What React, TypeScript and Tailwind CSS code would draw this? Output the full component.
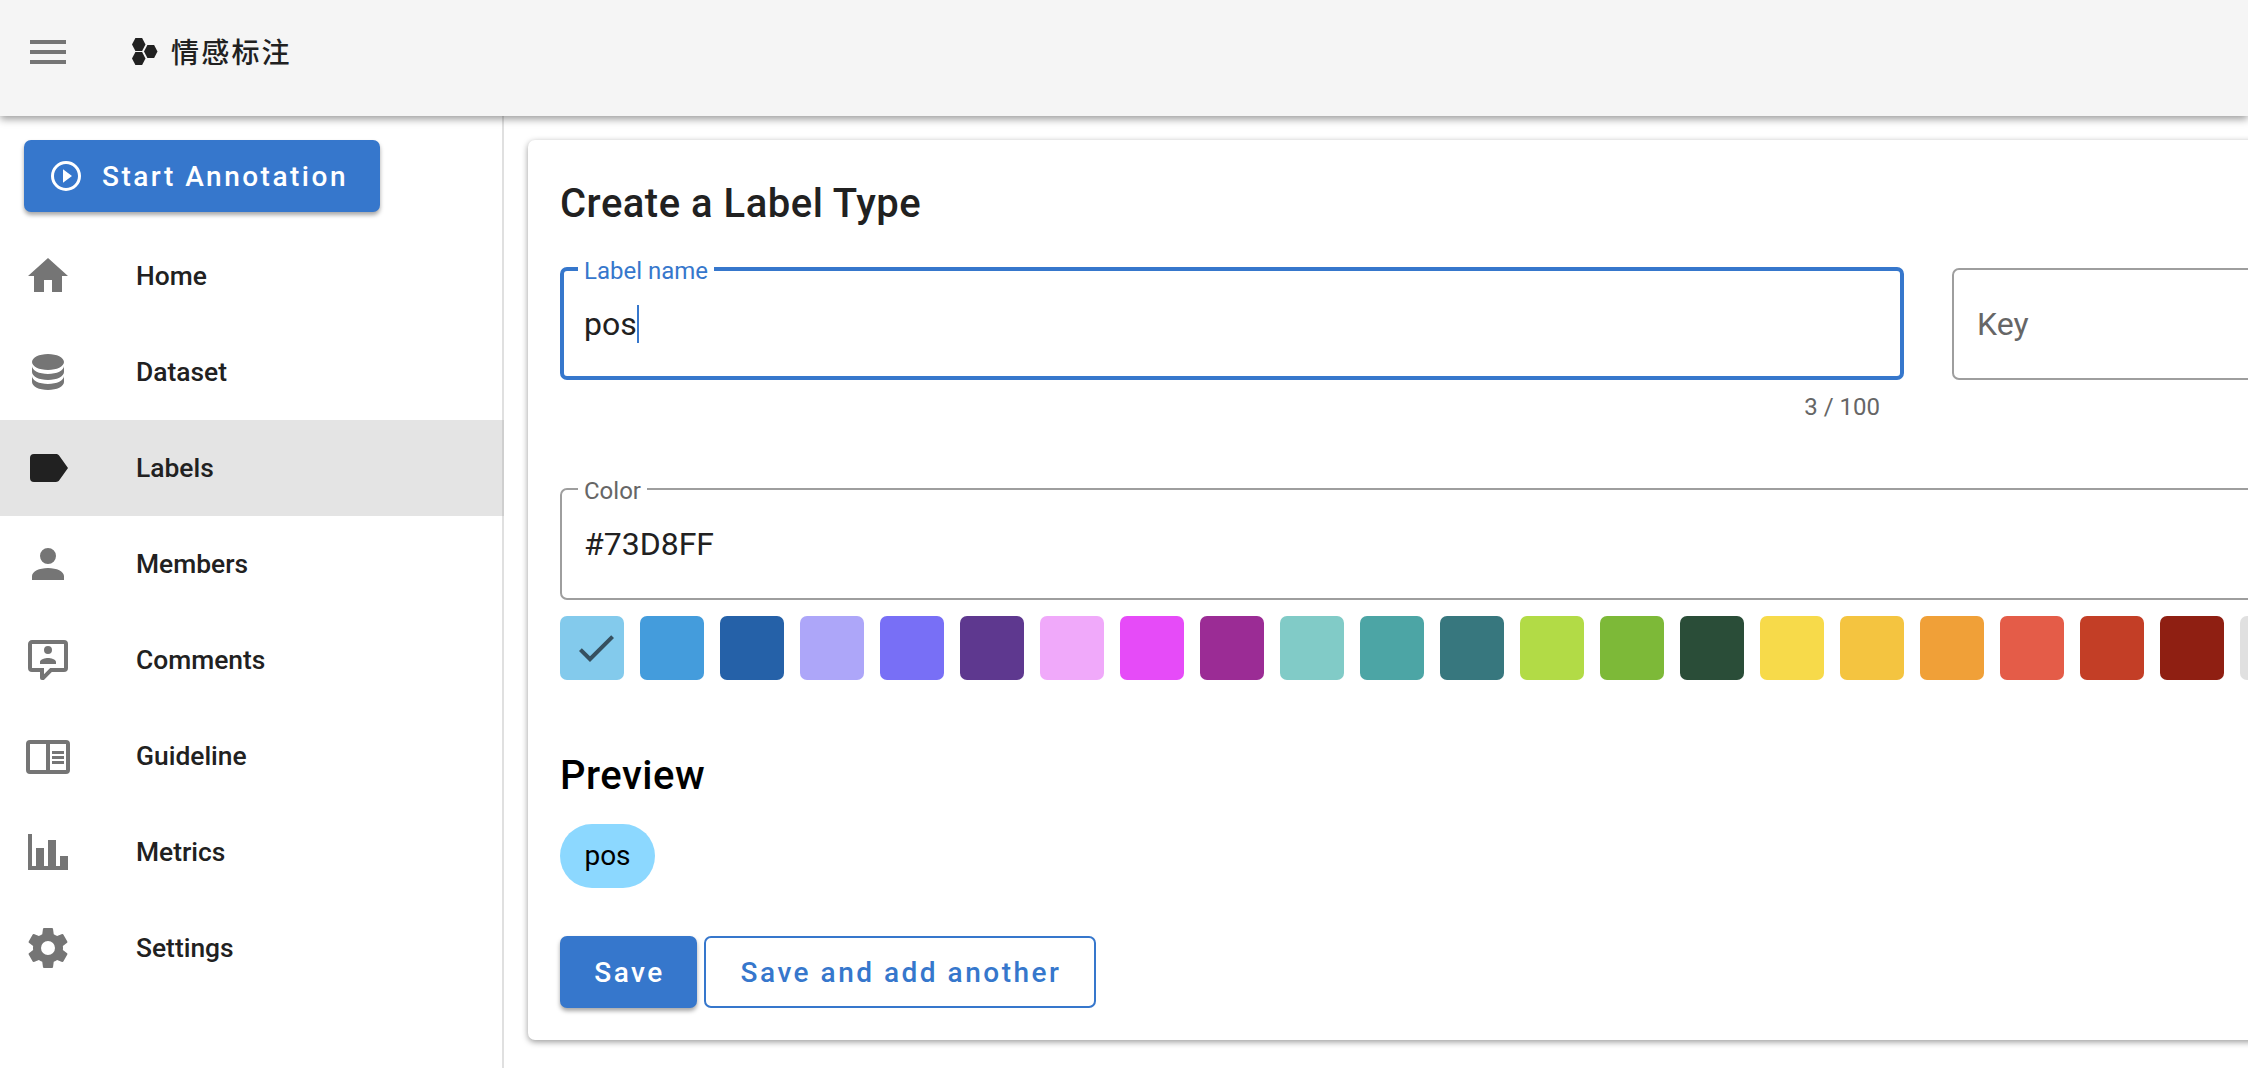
import React from 'react';

const nav = [
  { label: 'Home', d: 'M10,20V14H14V20H19V12H22L12,3L2,12H5V20H10Z' },
  { label: 'Dataset', d: 'M12,3C7.58,3 4,4.79 4,7C4,9.21 7.58,11 12,11C16.42,11 20,9.21 20,7C20,4.79 16.42,3 12,3M4,9V12C4,14.21 7.58,16 12,16C16.42,16 20,14.21 20,12V9C20,11.21 16.42,13 12,13C7.58,13 4,11.21 4,9M4,14V17C4,19.21 7.58,21 12,21C16.42,21 20,19.21 20,17V14C20,16.21 16.42,18 12,18C7.58,18 4,16.21 4,14Z' },
  { label: 'Labels', d: 'M17.63,5.84C17.27,5.33 16.67,5 16,5H5A2,2 0 0,0 3,7V17A2,2 0 0,0 5,19H16C16.67,19 17.27,18.66 17.63,18.15L22,12L17.63,5.84Z', active: true },
  { label: 'Members', d: 'M12,4A4,4 0 0,1 16,8A4,4 0 0,1 12,12A4,4 0 0,1 8,8A4,4 0 0,1 12,4M12,14C16.42,14 20,15.79 20,18V20H4V18C4,15.79 7.58,14 12,14Z' },
  { label: 'Comments', d: 'M9,22A1,1 0 0,1 8,21V18H4A2,2 0 0,1 2,16V4C2,2.89 2.9,2 4,2H20A2,2 0 0,1 22,4V16A2,2 0 0,1 20,18H13.9L10.2,21.71C10,21.9 9.75,22 9.5,22H9M10,16V19.08L13.08,16H20V4H4V16H10M16,14H8V13C8,11.67 10.67,11 12,11C13.33,11 16,11.67 16,13V14M12,5A2,2 0 0,1 14,7A2,2 0 0,1 12,9A2,2 0 0,1 10,7A2,2 0 0,1 12,5Z' },
  { label: 'Guideline', d: 'M21,4H3A2,2 0 0,0 1,6V19A2,2 0 0,0 3,21H21A2,2 0 0,0 23,19V6A2,2 0 0,0 21,4M3,19V6H11V19H3M21,19H13V6H21V19M14,9.5H20V11H14V9.5M14,12H20V13.5H14V12M14,14.5H20V16H14V14.5Z' },
  { label: 'Metrics', d: 'M22,21H2V3H4V19H6V10H10V19H12V6H16V19H18V14H22V21Z' },
  { label: 'Settings', d: 'M12,15.5A3.5,3.5 0 0,1 8.5,12A3.5,3.5 0 0,1 12,8.5A3.5,3.5 0 0,1 15.5,12A3.5,3.5 0 0,1 12,15.5M19.43,12.97C19.47,12.65 19.5,12.33 19.5,12C19.5,11.67 19.47,11.34 19.43,11L21.54,9.37C21.73,9.22 21.78,8.95 21.66,8.73L19.66,5.27C19.54,5.05 19.27,4.96 19.05,5.05L16.56,6.05C16.04,5.66 15.5,5.32 14.87,5.07L14.5,2.42C14.46,2.18 14.25,2 14,2H10C9.75,2 9.54,2.18 9.5,2.42L9.13,5.07C8.5,5.32 7.96,5.66 7.44,6.05L4.95,5.05C4.73,4.96 4.46,5.05 4.34,5.27L2.34,8.73C2.21,8.95 2.27,9.22 2.46,9.37L4.57,11C4.53,11.34 4.5,11.67 4.5,12C4.5,12.33 4.53,12.65 4.57,12.97L2.46,14.63C2.27,14.78 2.21,15.05 2.34,15.27L4.34,18.73C4.46,18.95 4.73,19.03 4.95,18.95L7.44,17.94C7.96,18.34 8.5,18.68 9.13,18.93L9.5,21.58C9.54,21.82 9.75,22 10,22H14C14.25,22 14.46,21.82 14.5,21.58L14.87,18.93C15.5,18.67 16.04,18.34 16.56,17.94L19.05,18.95C19.27,19.03 19.54,18.95 19.66,18.73L21.66,15.27C21.78,15.05 21.73,14.78 21.54,14.63L19.43,12.97Z' },
];

const swatches = [
  '#83caec', '#449cdc', '#2561a8', '#ada6f9', '#786ff6', '#5e388f', '#f0a9fa', '#e64bf8',
  '#9b2c95', '#81cbc7', '#4ca5a5', '#37777e', '#b2db46', '#7db938', '#2a4d38', '#f7da4a',
  '#f4c440', '#f0a038', '#e45c48', '#c33e26', '#8f1f12', '#e0e0e0',
];

const Icon = ({ d, className }: { d: string; className?: string }) => (
  <svg viewBox="0 0 24 24" className={`w-12 h-12 shrink-0 fill-current ${className ?? ''}`}>
    <path d={d} />
  </svg>
);

export default function App() {
  return (
    <div className="w-[2248px] h-[1068px] overflow-hidden flex flex-col bg-white font-[Roboto,sans-serif] text-[#212121]">
      <header className="relative z-10 h-[116px] shrink-0 flex items-start bg-[#f5f5f5] shadow-[0_3px_8px_rgba(0,0,0,0.4)]">
        <Icon d="M3,6H21V8H3V6M3,11H21V13H3V11M3,16H21V18H3V16Z" className="ml-6 mt-[28px] text-[#757575]" />
        <div className="ml-[60px] mt-[35px] flex items-center h-[32px]">
          <svg viewBox="0 0 28 30" className="w-[28px] h-[30px] fill-[#212121]">
            <polygon points="0,8.5 3.4,2 10.1,2 13.5,8.5 10.1,15 3.4,15" />
            <polygon points="0,22.5 3.4,16 10.1,16 13.5,22.5 10.1,29 3.4,29" />
            <polygon points="12,15.5 15.4,9 22.1,9 25.5,15.5 22.1,22 15.4,22" />
          </svg>
          <span className="ml-[11px] text-[28px] font-medium tracking-[2.2px] font-['Noto_Sans_CJK_SC',sans-serif]">情感标注</span>
        </div>
      </header>

      <div className="flex flex-1 min-h-0">
        <aside className="w-[504px] shrink-0 border-r-2 border-[#e0e0e0] pt-6">
          <button className="ml-6 w-[356px] h-[72px] flex items-center bg-[#3677cc] text-white rounded-[7px] shadow-[0_3px_4px_rgba(0,0,0,0.35)]">
            <svg viewBox="0 0 24 24" className="ml-[24px] w-9 h-9 fill-white">
              <path d="M10,16.5L16,12L10,7.5V16.5M12,2A10,10 0 0,0 2,12A10,10 0 0,0 12,22A10,10 0 0,0 22,12A10,10 0 0,0 12,2M12,20C7.59,20 4,16.41 4,12C4,7.59 7.59,4 12,4C16.41,4 20,7.59 20,12C20,16.41 16.41,20 12,20Z" />
            </svg>
            <span className="ml-[18px] mt-[2px] text-[28px] font-medium tracking-[2.5px]">Start Annotation</span>
          </button>
          <nav className="mt-4">
            {nav.map((item) => (
              <div key={item.label} className={`h-[96px] flex items-center pl-6 ${item.active ? '-mr-[2px] border-r-2 border-[#cfcfcf] bg-[#e4e4e4]' : ''}`}>
                <Icon d={item.d} className={item.active ? 'text-[#212121]' : 'text-[#757575]'} />
                <span className="ml-[64px] mt-px text-[26.4px] font-medium">{item.label}</span>
              </div>
            ))}
          </nav>
        </aside>

        <main className="flex-1 min-w-0 overflow-hidden pt-6 pl-6 pb-4">
          <div className="w-[1900px] h-[900px] bg-white rounded-[7px] shadow-[0_2px_6px_rgba(0,0,0,0.4)] pl-8 pt-[41px]">
            <h1 className="text-[40px] leading-[46px] font-medium tracking-[0.5px]">Create a Label Type</h1>

            <div className="mt-[40px] flex gap-[48px] items-start">
              <div className="w-[1344px] shrink-0">
                <div className="relative h-[113px] flex items-center pl-[20px] pt-px rounded-[7px] border-4 border-[#3677cc]">
                  <span className="absolute left-[14px] -top-[14px] px-[6px] bg-white text-[24px] leading-[28px] text-[#3677cc]">Label name</span>
                  <span className="text-[32px]">pos</span>
                  <span className="w-[2px] h-[38px] bg-[#3677cc]" />
                </div>
                <div className="mt-[15px] pr-[24px] text-right text-[24px] leading-[24px] text-[#666666]">3 / 100</div>
              </div>
              <div className="mt-px w-[500px] h-[112px] shrink-0 flex items-center pl-[23px] rounded-[7px] border-2 border-[#9e9e9e] text-[32px] text-[#666666]">Key</div>
            </div>

            <div className="relative mt-[69px] w-[1840px] h-[112px] flex items-center pl-[22px] rounded-[7px] border-2 border-[#9e9e9e] text-[32px]">
              <span className="absolute left-[16px] -top-[13px] px-[6px] bg-white text-[24px] leading-[28px] text-[#666666]">Color</span>
              #73D8FF
            </div>

            <div className="mt-4 flex gap-4">
              {swatches.map((color, i) => (
                <div key={color} className="relative w-16 h-16 shrink-0 rounded-[7px] flex items-center justify-center" style={{ backgroundColor: color }}>
                  {i === 0 && (
                    <svg viewBox="0 0 24 24" className="absolute left-[12px] top-2 w-12 h-12 fill-[#36505f]">
                      <path d="M21,7L9,19L3.5,13.5L4.91,12.09L9,16.17L19.59,5.59L21,7Z" />
                    </svg>
                  )}
                </div>
              ))}
            </div>

            <h2 className="mt-[73px] text-[40px] leading-[46px] font-medium tracking-[0.5px] text-black">Preview</h2>
            <div className="mt-[25px] w-[95px] h-[64px] flex items-center justify-center rounded-full bg-[#8cd8ff] text-[28px] text-black">pos</div>

            <div className="mt-[48px] flex gap-[7px]">
              <button className="w-[137px] h-[72px] pl-[2px] pt-[2px] rounded-[7px] bg-[#3677cc] text-white text-[28px] font-medium tracking-[2.5px] shadow-[0_3px_4px_rgba(0,0,0,0.35)]">Save</button>
              <button className="w-[392px] h-[72px] pl-[2px] pt-[2px] rounded-[7px] border-2 border-[#3677cc] text-[#3677cc] text-[28px] font-medium tracking-[2.5px]">Save and add another</button>
            </div>
          </div>
        </main>
      </div>
    </div>
  );
}
